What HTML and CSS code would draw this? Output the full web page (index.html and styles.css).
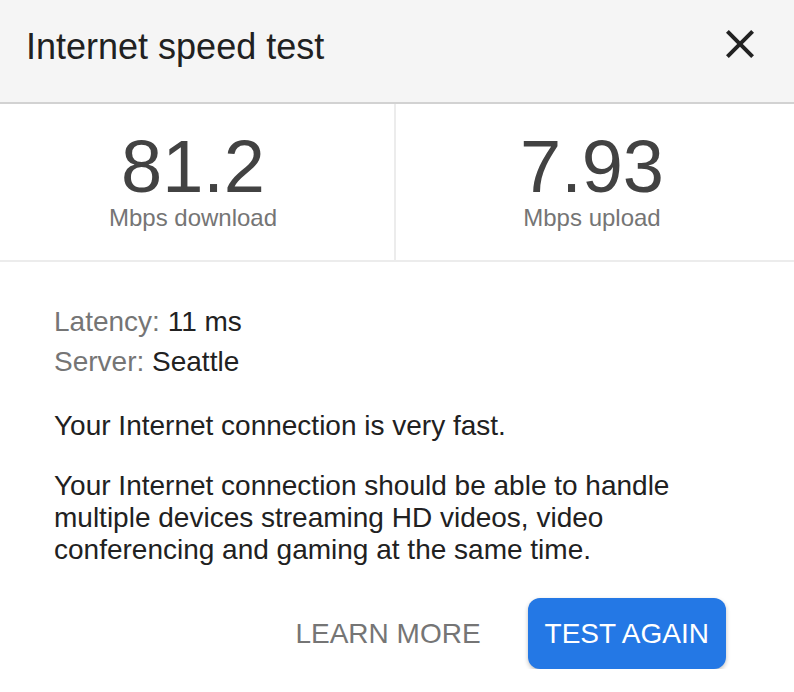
FILE: index.html
```html
<!DOCTYPE html>
<html lang="en">
<head>
<meta charset="utf-8">
<title>Internet speed test</title>
<link rel="stylesheet" href="styles.css">
</head>
<body>
<div class="card">
  <header class="header">
    <h1 class="title">Internet speed test</h1>
    <button class="close" aria-label="Close">
      <svg width="48" height="48" viewBox="0 0 24 24"><path d="M19 6.41L17.59 5 12 10.59 6.41 5 5 6.41 10.59 12 5 17.59 6.41 19 12 13.41 17.59 19 19 17.59 13.41 12z" fill="#222"/></svg>
    </button>
  </header>
  <section class="speeds">
    <div class="speed speed-down">
      <div class="speed-value">81.2</div>
      <div class="speed-unit">Mbps download</div>
    </div>
    <div class="speed">
      <div class="speed-value">7.93</div>
      <div class="speed-unit">Mbps upload</div>
    </div>
  </section>
  <section class="details">
    <div class="stat"><span class="stat-label">Latency:</span> 11 ms</div>
    <div class="stat"><span class="stat-label">Server:</span> Seattle</div>
    <p class="para para-first">Your Internet connection is very fast.</p>
    <p class="para">Your Internet connection should be able to handle multiple devices streaming HD videos, video conferencing and gaming at the same time.</p>
  </section>
  <div class="actions">
    <button class="btn btn-text">LEARN MORE</button>
    <button class="btn btn-primary">TEST AGAIN</button>
  </div>
</div>
</body>
</html>
```
FILE: styles.css
```css
* { box-sizing: border-box; }
html, body { margin: 0; padding: 0; background: #fff; }
body {
  font-family: "Liberation Sans", Arial, Helvetica, sans-serif;
  color: #212121;
}
.card { width: 794px; }
.header {
  height: 104px;
  background: #f5f5f5;
  border-bottom: 2px solid #d2d2d2;
  display: flex;
  justify-content: space-between;
  align-items: flex-start;
  padding-left: 26px;
}
.title {
  margin: 27px 0 0 0;
  font-size: 36px;
  line-height: 40px;
  font-weight: normal;
  color: #212121;
}
.close {
  margin: 20px 30px 0 0;
  padding: 0;
  border: 0;
  background: none;
  width: 48px;
  height: 48px;
  display: block;
}
.close svg { display: block; }
.speeds {
  display: flex;
  height: 158px;
  border-bottom: 2px solid #ececec;
}
.speed {
  flex: 1 1 auto;
  text-align: center;
  padding-top: 23px;
  padding-right: 6px;
}
.speed-down {
  flex: 0 0 396px;
  border-right: 2px solid #ececec;
  padding-right: 8px;
}
.speed-value {
  font-size: 74px;
  line-height: 80px;
  color: #424242;
}
.speed-unit {
  font-size: 24px;
  line-height: 22px;
  color: #757575;
}
.details {
  padding: 40px 54px 0 54px;
  font-size: 28px;
}
.stat { line-height: 40px; color: #212121; }
.stat-label { color: #757575; }
.para {
  margin: 28px 0 0 0;
  line-height: 32px;
  color: #212121;
}
.actions {
  display: flex;
  justify-content: flex-end;
  align-items: center;
  gap: 30px;
  padding: 32px 68px 0 0;
}
.btn {
  font-family: "Liberation Sans", Arial, Helvetica, sans-serif;
  font-size: 28px;
  height: 71px;
  padding: 0 17px;
  border: 0;
  border-radius: 12px;
  background: none;
  line-height: 71px;
}
.btn-text { color: #757575; }
.btn-primary {
  background: #2478e5;
  color: #fff;
  box-shadow: 0 2px 4px rgba(0, 0, 0, 0.25);
}
```
